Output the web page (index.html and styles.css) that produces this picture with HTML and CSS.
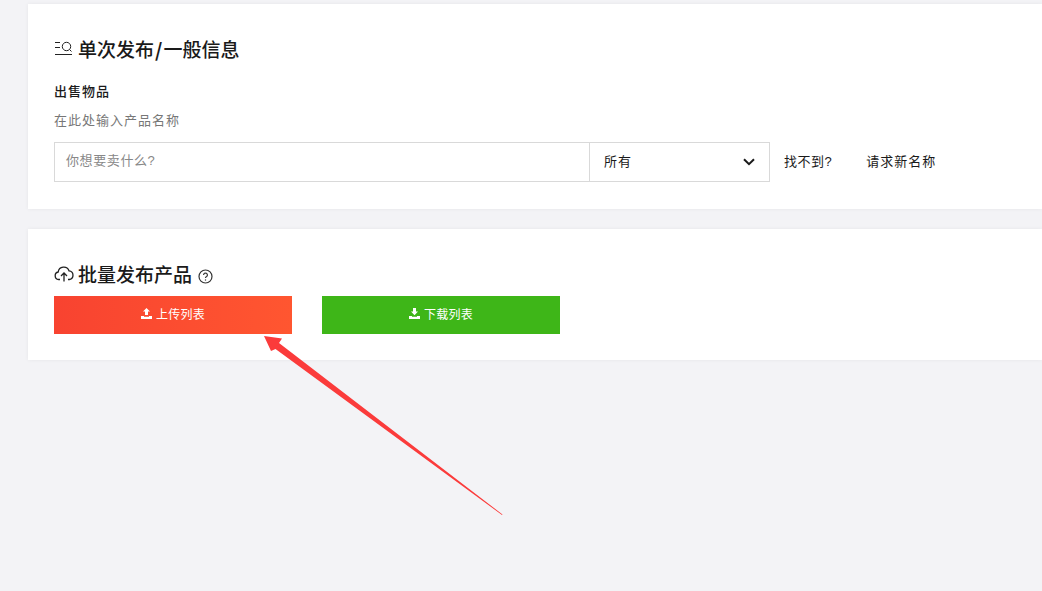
FILE: index.html
```html
<!DOCTYPE html>
<html lang="zh-CN">
<head>
    <meta charset="UTF-8">
    <title>发布产品</title>
    <link rel="stylesheet" href="styles.css">
</head>
<body>
    <div class="page">
        <section class="card card-single">
            <h2 class="card-title">
                <svg class="title-icon" width="19" height="16" viewBox="0 0 19 16" fill="none" stroke="#222" stroke-width="1">
                    <path d="M1 2.500h5M1 7.500h5M1 14.500h17"/>
                    <circle cx="12.500" cy="6.500" r="4.200"/>
                    <path d="M15.500 9.500l2 2"/>
                </svg>
                <span>单次发布<b class="slash">/</b>一般信息</span>
            </h2>
            <div class="field-label">出售物品</div>
            <div class="field-hint">在此处输入产品名称</div>
            <div class="search-row">
                <div class="search-box">
                    <div class="search-input">你想要卖什么?</div>
                    <div class="search-select">
                        <span class="select-value">所有</span>
                        <svg width="12" height="8" viewBox="0 0 12 8" fill="none" stroke="#1a1a1a" stroke-width="2">
                            <path d="M1 1.200l5 5 5-5"/>
                        </svg>
                    </div>
                </div>
                <a class="search-link link-missing">找不到?</a>
                <a class="search-link">请求新名称</a>
            </div>
        </section>

        <section class="card card-bulk">
            <h2 class="card-title bulk-title">
                <svg class="title-icon cloud-icon" width="20" height="17" viewBox="0 0 20 17" fill="none" stroke="#222" stroke-width="1.300">
                    <path d="M6 14.500H4.600A3.800 3.800 0 0 1 4.200 7 5.600 5.600 0 0 1 15 5.800a4.400 4.400 0 0 1 .4 8.700H14"/>
                    <path d="M10 16.500V8.500M7 11l3-3 3 3"/>
                </svg>
                批量发布产品
                <svg class="help-icon" width="15" height="15" viewBox="0 0 15 15" fill="none" stroke="#333" stroke-width="1.200">
                    <circle cx="7.500" cy="7.500" r="6.500"/>
                    <path d="M5.600 6a1.900 1.900 0 1 1 2.900 1.600c-.7.400-1 .8-1 1.500"/>
                    <path d="M7.500 10.400v1.200"/>
                </svg>
            </h2>
            <div class="bulk-actions">
                <a class="btn btn-upload">
                    <svg width="11" height="11" viewBox="0 0 11 11" fill="#fff">
                        <path d="M5.500 0L9 3.600H7V7H4V3.600H2z"/>
                        <path d="M0 8h3v.8h5V8h3v3H0z"/>
                    </svg>
                    <span>上传列表</span>
                </a>
                <a class="btn btn-download">
                    <svg width="11" height="11" viewBox="0 0 11 11" fill="#fff">
                        <path d="M4 0h3v3.600h2L5.500 7.200 2 3.600h2z"/>
                        <path d="M0 8h3v.8h5V8h3v3H0z"/>
                    </svg>
                    <span>下载列表</span>
                </a>
            </div>
        </section>

        <svg class="arrow" width="260" height="200" viewBox="0 0 260 200">
            <polygon points="6,6 24,8.500 21,13 244.500,184.500 244,185 17.500,19 13,21" fill="#fb3b3b"/>
        </svg>
    </div>
</body>
</html>
```

FILE: styles.css
```css
html, body {
    margin: 0;
    height: 100%;
    overflow: hidden;
}
body {
    background: #f3f3f6;
    font-family: "Liberation Sans", "Noto Sans CJK SC", sans-serif;
    color: #1a1a1a;
}
.page {
    position: relative;
    padding: 4px 0 0 28px;
}
.card {
    background: #fff;
    box-shadow: 0 0 4px rgba(0,0,0,0.06);
    padding-left: 26px;
}
.card-single {
    height: 205px;
    margin-bottom: 20px;
}
.card-bulk {
    height: 131px;
}
.card-title {
    display: flex;
    align-items: center;
    margin: 0;
    padding-top: 33px;
    height: 22px;
    font-size: 19px;
    font-weight: 500;
    color: #1a1a1a;
}
.title-icon {
    margin-right: 5px;
}
.slash {
    font-family: "Noto Sans CJK SC", sans-serif;
    font-weight: 700;
    margin: 0 1px;
}
.cloud-icon {
    margin-right: 4px;
}
.help-icon {
    margin-left: 6px;
    margin-top: 7px;
}
.field-label {
    margin-top: 24px;
    font-size: 13px;
    line-height: 18px;
    font-weight: 500;
    letter-spacing: 1px;
}
.field-hint {
    margin-top: 11px;
    font-size: 13px;
    line-height: 18px;
    letter-spacing: 1px;
    color: #777;
}
.search-row {
    display: flex;
    align-items: center;
    margin-top: 12px;
}
.search-box {
    display: flex;
    box-sizing: border-box;
    width: 716px;
    height: 40px;
    border: 1px solid #d9d9d9;
}
.search-input {
    box-sizing: border-box;
    width: 535px;
    padding-left: 11px;
    line-height: 36px;
    font-size: 13px;
    letter-spacing: 0.6px;
    color: #888;
    border-right: 1px solid #d9d9d9;
}
.search-select {
    flex: 1;
    display: flex;
    align-items: center;
    justify-content: space-between;
    padding: 0 14px;
    font-size: 13px;
    letter-spacing: 1px;
}
.select-value {
    margin-bottom: 4px;
}
.search-link {
    font-size: 13px;
    color: #1a1a1a;
    letter-spacing: 1px;
    margin-left: 14px;
    margin-bottom: 4px;
}
.link-missing {
    margin-right: 20px;
    letter-spacing: 0.5px;
}
.bulk-actions {
    display: flex;
    gap: 30px;
    margin-top: 12px;
}
.btn {
    display: flex;
    align-items: center;
    justify-content: center;
    gap: 4px;
    width: 238px;
    height: 38px;
    padding-bottom: 4px;
    box-sizing: border-box;
    font-size: 12px;
    letter-spacing: 0.25px;
    color: #fff;
}
.btn-upload {
    background: linear-gradient(90deg, #f84330, #ff5630);
}
.btn-download {
    background: #3eb618;
}
.arrow {
    position: absolute;
    left: 258px;
    top: 330px;
}
```
